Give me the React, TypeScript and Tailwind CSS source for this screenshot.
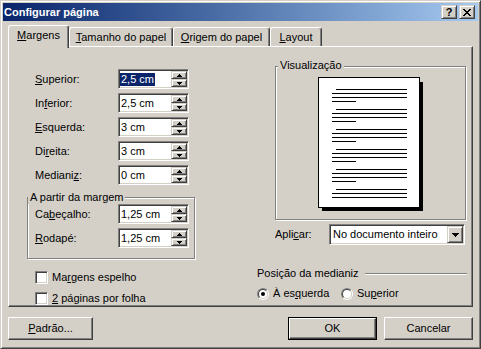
import type { ReactNode } from 'react'

const face = "font-['Liberation_Sans',Arial,sans-serif]"

// classic 3D edges
const raised =
  'border border-t-white border-l-white border-r-[#404040] border-b-[#404040] shadow-[inset_-1px_-1px_0_#808080]'
const smallRaised =
  'border border-t-[#d4d0c8] border-l-[#d4d0c8] border-r-[#404040] border-b-[#404040] shadow-[inset_1px_1px_0_#fff,inset_-1px_-1px_0_#808080]'
const sunken =
  'border border-t-[#808080] border-l-[#808080] border-r-white border-b-white shadow-[inset_1px_1px_0_#404040,inset_-1px_-1px_0_#d4d0c8] p-[1px]'
const etched = 'border border-[#808080] shadow-[inset_1px_1px_0_#fff,1px_1px_0_#fff]'

function U({ children }: { children: ReactNode }) {
  return <span className="underline decoration-1 underline-offset-[1px]">{children}</span>
}

function Arrow({ up }: { up?: boolean }) {
  return (
    <svg width="5" height="3" viewBox="0 0 5 3" shapeRendering="crispEdges">
      {up ? (
        <g fill="#000">
          <rect x="2" y="0" width="1" height="1" />
          <rect x="1" y="1" width="3" height="1" />
          <rect x="0" y="2" width="5" height="1" />
        </g>
      ) : (
        <g fill="#000">
          <rect x="0" y="0" width="5" height="1" />
          <rect x="1" y="1" width="3" height="1" />
          <rect x="2" y="2" width="1" height="1" />
        </g>
      )}
    </svg>
  )
}

function SpinBox({ value, selected }: { value: string; selected?: boolean }) {
  return (
    <div className={`w-[71px] h-[20px] bg-white flex items-center ${sunken}`}>
      <span className={`px-[1px] leading-[13px] ${selected ? 'bg-[#0a246a] text-white' : ''}`}>{value}</span>
      <div className="ml-auto flex flex-col w-[16px] h-full">
        <div className={`h-[8px] bg-[#d4d0c8] flex items-center justify-center ${smallRaised}`}>
          <Arrow up />
        </div>
        <div className={`h-[8px] bg-[#d4d0c8] flex items-center justify-center ${smallRaised}`}>
          <Arrow />
        </div>
      </div>
    </div>
  )
}

function Field({ label, value, selected, inset }: { label: ReactNode; value: string; selected?: boolean; inset?: boolean }) {
  return (
    <div className="flex items-center h-[20px]">
      <div className={inset ? 'w-[90px] pl-[7px]' : 'w-[91px] pl-[8px]'}>{label}</div>
      <SpinBox value={value} selected={selected} />
    </div>
  )
}

function CheckBox() {
  return <div className={`w-[13px] h-[13px] bg-white ${sunken}`} />
}

function Radio({ on }: { on?: boolean }) {
  return (
    <div className="w-[12px] h-[12px] rounded-full border border-t-[#808080] border-l-[#808080] border-r-white border-b-white">
      <div className="w-full h-full rounded-full border border-t-[#404040] border-l-[#404040] border-r-[#d4d0c8] border-b-[#d4d0c8] bg-white flex items-center justify-center">
        {on && <div className="w-[4px] h-[4px] rounded-full bg-black" />}
      </div>
    </div>
  )
}

function PagePreview() {
  const groups = [12, 32, 52, 72, 92]
  return (
    <svg width="105" height="134" viewBox="0 0 105 134" shapeRendering="crispEdges">
      <rect x="102" y="5" width="3" height="129" fill="#000" />
      <rect x="4" y="131" width="101" height="3" fill="#000" />
      <rect x="0.5" y="0.5" width="101" height="130" fill="#fff" stroke="#000" />
      {groups.map(y => (
        <g key={y} fill="#000">
          <rect x="18" y={y} width="71" height="1" />
          <rect x="14" y={y + 4} width="75" height="1" />
          <rect x="14" y={y + 8} width="75" height="1" />
          <rect x="14" y={y + 12} width="24" height="1" />
        </g>
      ))}
      <g fill="#000">
        <rect x="18" y="112" width="71" height="1" />
        <rect x="14" y="116" width="75" height="1" />
        <rect x="14" y="120" width="75" height="1" />
      </g>
    </svg>
  )
}

function Tab({ children, width, active }: { children: ReactNode; width: string; active?: boolean }) {
  return (
    <div
      className={`${width} ${
        active ? 'relative z-10 h-[23px] -mb-[2px] bg-[#d4d0c8]' : 'h-[19px]'
      } border-t border-l border-r border-t-white border-l-white border-r-[#404040] rounded-t-[3px] shadow-[inset_-1px_0_0_#808080] flex justify-center pt-[3px]`}
    >
      <span className="leading-[13px]">{children}</span>
    </div>
  )
}

function Button({ children, width, isDefault }: { children: ReactNode; width: string; isDefault?: boolean }) {
  if (isDefault) {
    return (
      <div className={`${width} h-[23px] border border-black`}>
        <div className={`w-full h-full flex items-center justify-center ${raised}`}>{children}</div>
      </div>
    )
  }
  return <div className={`${width} h-[23px] flex items-center justify-center ${raised}`}>{children}</div>
}

function CaptionButton({ children }: { children: ReactNode }) {
  return (
    <div className={`w-[16px] h-[14px] bg-[#d4d0c8] flex items-center justify-center ${smallRaised}`}>{children}</div>
  )
}

export default function App() {
  return (
    <div
      className={`w-[481px] h-[349px] bg-[#d4d0c8] text-[11px] leading-[13px] text-black ${face} border border-t-[#d4d0c8] border-l-[#d4d0c8] border-r-[#404040] border-b-[#404040] shadow-[inset_1px_1px_0_#fff,inset_-1px_-1px_0_#808080] p-[2px] flex flex-col`}
    >
      {/* title bar */}
      <div className="h-[18px] bg-linear-to-r from-[#0a246a] to-[#a6caf0] flex items-center pl-[1px] pr-[3px]">
        <span className="font-bold text-white text-[11px]">Configurar página</span>
        <div className="ml-auto flex gap-[2px]">
          <CaptionButton>
            <span className="font-bold text-[11px] leading-none">?</span>
          </CaptionButton>
          <CaptionButton>
            <svg width="8" height="7" viewBox="0 0 8 7" shapeRendering="crispEdges" fill="#000">
              {[0, 1, 2, 3, 4, 5, 6].map(i => (
                <g key={i}>
                  <rect x={i} y={i} width="2" height="1" />
                  <rect x={6 - i} y={i} width="2" height="1" />
                </g>
              ))}
            </svg>
          </CaptionButton>
        </div>
      </div>

      <div className="px-[5px] pt-[4px] flex flex-col">
        {/* tabs */}
        <div className="flex items-end h-[21px]">
          <Tab width="w-[61px]" active>
            <U>M</U>argens
          </Tab>
          <Tab width="w-[104px]">
            <U>T</U>amanho do papel
          </Tab>
          <Tab width="w-[97px]">
            <U>O</U>rigem do papel
          </Tab>
          <Tab width="w-[52px]">
            <U>L</U>ayout
          </Tab>
        </div>

        {/* tab panel */}
        <div className={`h-[261px] flex ${raised}`}>
          <div className="ml-[18px] pt-[22px] w-[168px] flex flex-col">
            <div className="flex flex-col gap-[4px]">
              <Field label={<><U>S</U>uperior:</>} value="2,5 cm" selected />
              <Field label={<>In<U>f</U>erior:</>} value="2,5 cm" />
              <Field label={<><U>E</U>squerda:</>} value="3 cm" />
              <Field label={<>Di<U>r</U>eita:</>} value="3 cm" />
              <Field label={<>Mediani<U>z</U>:</>} value="0 cm" />
            </div>

            <div className={`relative mt-[12px] h-[62px] pt-[6px] flex flex-col gap-[4px] ${etched}`}>
              <span className="absolute left-0 top-[-7px] pl-[2px] pr-[1px] bg-[#d4d0c8]">A partir da margem</span>
              <Field inset label={<>Ca<U>b</U>eçalho:</>} value="1,25 cm" />
              <Field inset label={<><U>R</U>odapé:</>} value="1,25 cm" />
            </div>

            <div className="mt-[12px] flex items-center gap-[4px] pl-[8px] h-[13px]">
              <CheckBox />
              <span>
                Ma<U>r</U>gens espelho
              </span>
            </div>
            <div className="mt-[8px] flex items-center gap-[4px] pl-[8px] h-[13px]">
              <CheckBox />
              <span>
                <U>2</U> páginas por folha
              </span>
            </div>
          </div>

          <div className="ml-[62px] pt-[19px] w-[210px] flex flex-col">
            <div className={`relative ml-[18px] w-[191px] h-[154px] flex justify-center pt-[10px] ${etched}`}>
              <span className="absolute left-[2px] top-[-8px] px-[2px] bg-[#d4d0c8]">Visualização</span>
              <PagePreview />
            </div>

            <div className="mt-[4px] flex items-center h-[21px] pl-[18px]">
              <div className="w-[54px]">
                Apli<U>c</U>ar:
              </div>
              <div className={`w-[136px] h-[21px] bg-white flex items-center ${sunken}`}>
                <span className="pl-[2px]">No documento inteiro</span>
                <div className={`ml-auto w-[16px] h-full bg-[#d4d0c8] flex items-center justify-center ${smallRaised}`}>
                  <svg width="7" height="4" viewBox="0 0 7 4" shapeRendering="crispEdges" fill="#000">
                    <rect x="0" y="0" width="7" height="1" />
                    <rect x="1" y="1" width="5" height="1" />
                    <rect x="2" y="2" width="3" height="1" />
                    <rect x="3" y="3" width="1" height="1" />
                  </svg>
                </div>
              </div>
            </div>

            <div className="mt-[22px] flex items-center h-[13px]">
              <span>Posição da medianiz</span>
              <div className="flex-1 ml-[6px] h-[2px] border-t border-t-[#808080] border-b border-b-white" />
            </div>

            <div className="mt-[7px] flex items-center h-[13px]">
              <div className="w-[84px] flex items-center gap-[4px]">
                <Radio on />
                <span>
                  À es<U>q</U>uerda
                </span>
              </div>
              <div className="flex items-center gap-[4px]">
                <Radio />
                <span>
                  Su<U>p</U>erior
                </span>
              </div>
            </div>
          </div>
        </div>

        {/* buttons */}
        <div className="mt-[10px] flex h-[23px]">
          <Button width="w-[85px]">
            <span>
              <U>P</U>adrão...
            </span>
          </Button>
          <div className="ml-auto flex gap-[7px]">
            <Button width="w-[89px]" isDefault>
              OK
            </Button>
            <Button width="w-[89px]">Cancelar</Button>
          </div>
        </div>
      </div>
    </div>
  )
}
